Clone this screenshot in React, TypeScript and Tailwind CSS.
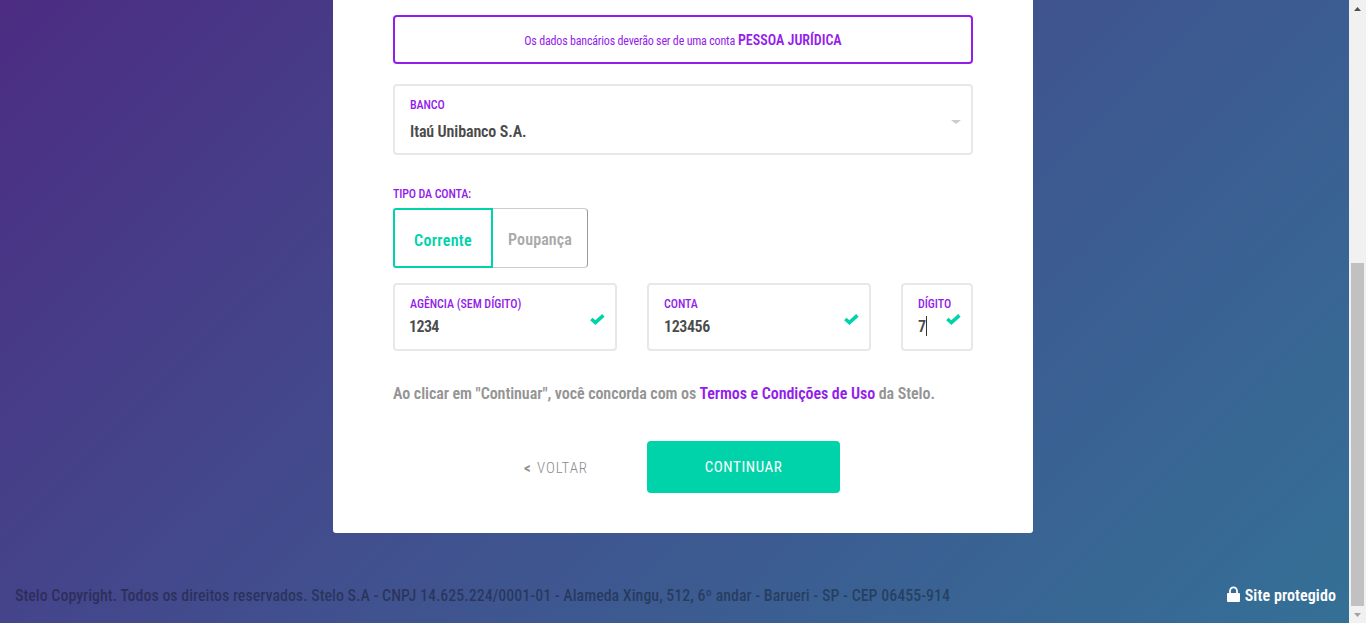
function Check() {
  return (
    <svg viewBox="0 0 15 11" className="h-[11px] w-[15px] fill-none stroke-[#00d3a9] stroke-[3.5]">
      <path d="M1.3 5 5.4 8.6 13.4 1.4" />
    </svg>
  );
}

type FieldProps = { label: string; value: string; className: string; valueClass?: string; caret?: boolean };

function Field({ label, value, className, valueClass = "", caret = false }: FieldProps) {
  return (
    <div className={`flex h-[68px] items-start justify-between rounded border-2 border-[#e8e8e8] pt-[11px] pl-[15px] pr-[10px] ${className}`}>
      <div className="whitespace-nowrap">
        <div className="text-[12px] leading-4 font-medium tracking-[-0.06px] text-[#931deb]">{label}</div>
        <div className="mt-1 flex items-center text-[16px] leading-[22px] font-semibold text-[#4a4a4a]">
          <span className={valueClass}>{value}</span>
          {caret && <span className="-mt-0.5 h-5 w-px bg-[#333]" />}
        </div>
      </div>
      <div className="mt-[18px] -ml-2">
        <Check />
      </div>
    </div>
  );
}

export default function App() {
  return (
    <div className="flex h-[623px] w-[1366px] overflow-hidden font-[Roboto,sans-serif] [font-stretch:78%]">
      <div className="flex flex-1 flex-col bg-[linear-gradient(135deg,#4c2c82_0%,#40528f_50%,#347096_100%)]">
        <main className="ml-[333px] h-[533px] w-[700px] rounded-b-[3px] bg-white px-[60px] pt-[15px]">
          <div className="flex h-[49px] items-center justify-center gap-[3px] rounded border-2 border-[#931deb] pt-[2px] text-[#931deb]">
            <span className="text-[12px] font-normal tracking-[-0.19px]">Os dados bancários deverão ser de uma conta</span>
            <span className="text-[14px] font-semibold">PESSOA JURÍDICA</span>
          </div>

          <div className="mt-5 flex h-[71px] items-start justify-between rounded border-2 border-[#e8e8e8] pt-[11px] pr-[10px] pl-[15px]">
            <div>
              <div className="text-[12px] leading-4 font-medium tracking-[-0.1px] text-[#931deb]">BANCO</div>
              <div className="mt-2 text-[16px] leading-[22px] font-semibold tracking-[-0.12px] text-[#4a4a4a]">Itaú Unibanco S.A.</div>
            </div>
            <svg viewBox="0 0 10 4" className="mt-[23px] h-1 w-[10px] fill-[#ccc]">
              <path d="M0 0H10L5 4Z" />
            </svg>
          </div>

          <div className="mt-[31px] text-[12px] leading-4 font-medium tracking-[-0.14px] text-[#931deb]">TIPO DA CONTA:</div>
          <div className="mt-[6px] flex h-[60px] text-[16px] font-semibold">
            <div className="flex w-[100px] items-center justify-center rounded-l-[3px] border-2 border-[#00d3a9] pt-[5px] tracking-[0.35px] text-[#00d3a9]">Corrente</div>
            <div className="flex w-[95px] items-center justify-center rounded-r border border-l-0 border-[#ccc] border-r-[#999] pt-[3px] tracking-[0.1px] text-[#aaa]">Poupança</div>
          </div>

          <div className="mt-[15px] flex gap-[30px]">
            <Field label="AGÊNCIA (SEM DÍGITO)" value="1234" className="w-56" valueClass="-ml-px tracking-[-0.6px]" />
            <Field label="CONTA" value="123456" className="w-56" valueClass="tracking-[-0.4px]" />
            <Field label="DÍGITO" value="7" caret className="w-[72px]" />
          </div>

          <p className="mt-[31px] text-[16px] leading-6 font-semibold tracking-[-0.06px] whitespace-nowrap text-[#949494]">
            Ao clicar em "Continuar", você concorda com os <span className="text-[#931deb]">Termos e Condições de Uso</span> da Stelo.
          </p>

          <div className="mt-[35px] flex h-[52px] items-center pl-[131px]">
            <div className="flex w-[123px] items-center pt-[3px] text-[15px] text-[#8c8c8c]">
              <span className="w-[13px] font-semibold">&lt;</span>
              <span className="font-[350] tracking-[0.9px]">VOLTAR</span>
            </div>
            <div className="flex h-[52px] w-[193px] items-center justify-center rounded bg-[#00d3a9] text-[15px] tracking-[0.6px] text-white">CONTINUAR</div>
          </div>
        </main>
        <footer className="mt-auto flex h-[54px] items-center justify-between pr-[13px] pl-[15px] text-[16px] font-semibold">
          <span className="font-medium tracking-[-0.016px] text-black/35">
            Stelo Copyright. Todos os direitos reservados. Stelo S.A - CNPJ 14.625.224/0001-01 - Alameda Xingu, 512, 6º andar - Barueri - SP - CEP 06455-914
          </span>
          <span className="flex items-center gap-[5px] tracking-[0.1px] text-white">
            <svg viewBox="0 0 13 16" className="-mt-1 h-4 w-[13px]">
              <path d="M3 8V4.8a3.5 3.5 0 0 1 7 0V8" fill="none" stroke="white" strokeWidth="1.8" />
              <rect y="7" width="13" height="9" rx="1" fill="white" />
            </svg>
            Site protegido
          </span>
        </footer>
      </div>
      <div className="flex w-[17px] flex-col items-center bg-[#f1f1f1] pt-[7px] pb-[6px]">
        <svg viewBox="0 0 7 4" className="h-1 w-[7px] fill-[#505050]">
          <path d="M0 4H7L3.5 0Z" />
        </svg>
        <div className="mt-[252px] h-[343px] w-[13px] bg-[#c1c1c1]" />
        <svg viewBox="0 0 7 4" className="mt-auto h-1 w-[7px] fill-[#a3a3a3]">
          <path d="M0 0H7L3.5 4Z" />
        </svg>
      </div>
    </div>
  );
}
